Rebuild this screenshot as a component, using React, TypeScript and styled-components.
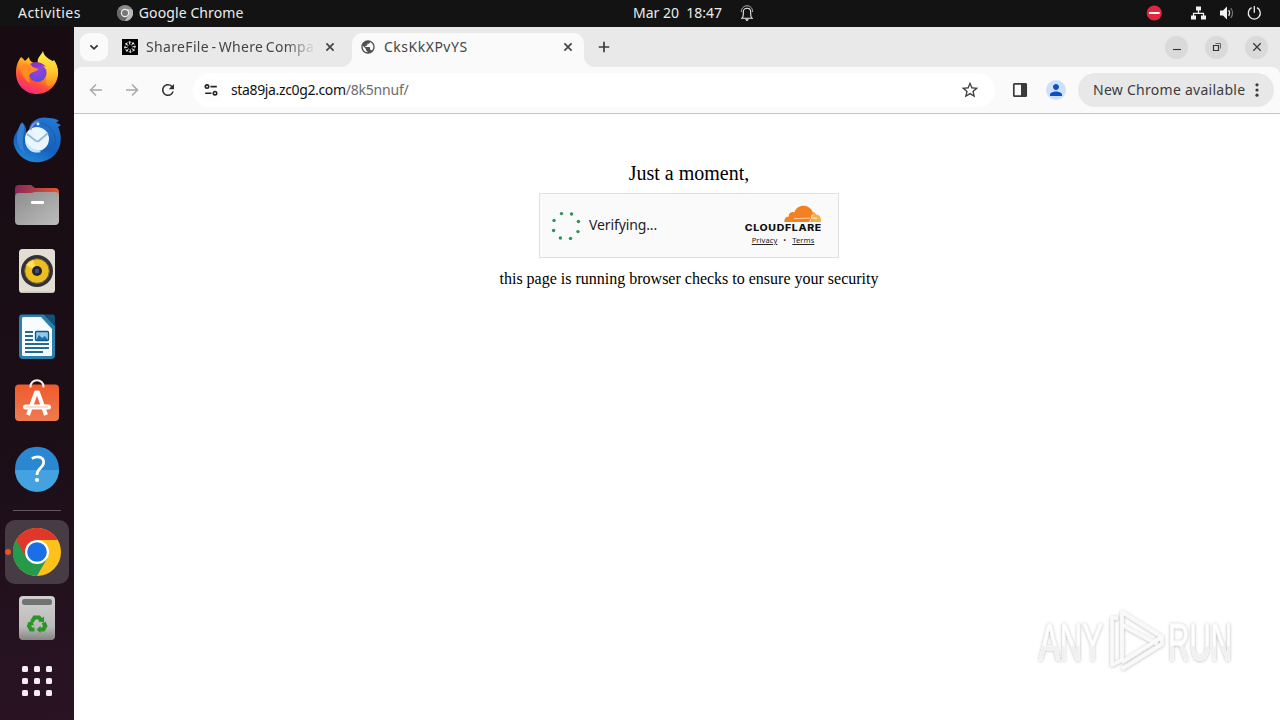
import React from "react";
import styled, { createGlobalStyle } from "styled-components";
import { MdOutlineStarBorder, MdPerson, MdPublic, MdRefresh } from "react-icons/md";

const GlobalStyle = createGlobalStyle`
  * {
    box-sizing: border-box;
  }
  body {
    margin: 0;
    overflow: hidden;
  }
`

const dots = [0, 1, 2, 3, 4, 5, 6, 7].map((i) => {
  const angle = ((i * 45 - 20) * Math.PI) / 180
  return { x: 15 + 13.2 * Math.cos(angle), y: 15 + 13.2 * Math.sin(angle) }
})

const FirefoxIcon = () => (
  <svg width="48" height="48" viewBox="0 0 48 48">
    <defs>
      <linearGradient id="ffBody" x1="0.8" y1="0.1" x2="0.3" y2="1">
        <stop offset="0" stopColor="#ffe141" />
        <stop offset="0.4" stopColor="#ff9a1f" />
        <stop offset="0.7" stopColor="#ff4a3d" />
        <stop offset="1" stopColor="#f5248a" />
      </linearGradient>
      <linearGradient id="ffTail" x1="0" y1="0" x2="0" y2="1">
        <stop offset="0" stopColor="#fff44f" />
        <stop offset="0.6" stopColor="#ffc52b" />
        <stop offset="1" stopColor="#ff8a20" />
      </linearGradient>
      <radialGradient id="ffGlobe" cx="0.5" cy="0.3" r="0.7">
        <stop offset="0" stopColor="#a240e0" />
        <stop offset="1" stopColor="#5a4bd6" />
      </radialGradient>
    </defs>
    <path d="M8 8 C10 9 11 11 12 12 L16 8 C16 11 18 13 21 14 L30 13 C34 8 39 11 42 14 C46 20 46 27 43 33 C39 41 32 45 24 45 C12 45 3 36 3 24 C3 19 4 13 8 8Z" fill="url(#ffBody)" />
    <path d="M30 2 C31 8 36 9 39 13 L41 11 C46 18 46 27 41 34 C37 39 34 38 33 33 L34 20 C29 18 23 15 25 10 C26 7 29 5 30 2Z" fill="url(#ffTail)" />
    <circle cx="24.5" cy="24" r="9" fill="url(#ffGlobe)" />
    <path d="M17 15 C22 12 30 13 33 18 C27 15 24 18 22 20Z" fill="#8c35cb" />
    <path d="M7 17 C12 14 17 15 20 18 L25 20 C24 23 20 22 17 25 C15 28 16 32 18 34 C11 32 8 24 7 17Z" fill="#ff8b21" />
  </svg>
)

const ThunderbirdIcon = () => (
  <svg width="48" height="48" viewBox="0 0 48 48">
    <defs>
      <linearGradient id="tbBody" x1="0.7" y1="0" x2="0.3" y2="1">
        <stop offset="0" stopColor="#2277d0" />
        <stop offset="0.6" stopColor="#1560bd" />
        <stop offset="1" stopColor="#2387d9" />
      </linearGradient>
    </defs>
    <path d="M16 14 C18 5 27 1 36 3 C40 3 44 4 46 6 L43 7.5 L48 10 L45 12 C51 24 47 39 35 44.5 C20 52 5 44 1 30 C-1 21 4 18 9 7 C12 10 14 13 13 20Z" fill="url(#tbBody)" />
    <path d="M8 8 C2 20 2 30 12 39 C7 26 12 18 11 10Z" fill="#347fd0" />
    <circle cx="24" cy="24" r="12" fill="#eaf6ff" />
    <path d="M14 19 L23 26 Q25 27 27 25 L35 18" fill="none" stroke="#91badc" strokeWidth="1.8" />
    <path d="M12 27 C14 36 21 39 28 37 C24 34 22 35 18 32Z" fill="#c6e7fb" />
    <path d="M17 14 C18 9 22 6 27 6 C22 8 20 10 18 16Z" fill="#9d8ae9" />
    <circle cx="25" cy="9" r="1.4" fill="#e0f5ff" />
    <path d="M28 8 C39 11 44 20 42 31" fill="none" stroke="#175fae" />
  </svg>
)

const FilesIcon = () => (
  <svg width="48" height="48" viewBox="0 0 48 48">
    <defs>
      <linearGradient id="filesBack">
        <stop stopColor="#832a5c" />
        <stop offset="1" stopColor="#e9562d" />
      </linearGradient>
      <linearGradient id="filesFront" x2="1" y2="1">
        <stop stopColor="#8d8d8d" />
        <stop offset="1" stopColor="#bdbdbd" />
      </linearGradient>
    </defs>
    <path d="M2 8 Q2 4 6 4 H18 L22 7 H42 Q46 7 46 11 V22 H2Z" fill="url(#filesBack)" />
    <path d="M6 12 H18 L22 11 H42 Q46 11 46 15 V40 Q46 44 42 44 H6 Q2 44 2 40 V16 Q2 12 6 12Z" fill="url(#filesFront)" />
    <rect x="18" y="20" width="13" height="3" rx="1" fill="#fff" />
  </svg>
)

const RhythmboxIcon = () => (
  <svg width="48" height="48" viewBox="0 0 48 48">
    <rect x="6" y="2" width="36" height="44" rx="3.5" fill="#e3ded3" />
    <path d="M9 45.2 H39" stroke="#bdb8ad" />
    <circle cx="24" cy="24" r="16" fill="#303139" />
    <circle cx="24" cy="24" r="12.3" fill="#edbd22" stroke="#786628" />
    <path d="M24 24 L13 18 A12 12 0 0 1 20 13Z" fill="#ffe05b" />
    <circle cx="24" cy="24" r="5" fill="#23252e" />
    <circle cx="24" cy="24" r="2.2" fill="#485164" />
  </svg>
)

const WriterIcon = () => (
  <svg width="48" height="48" viewBox="0 0 48 48">
    <path d="M9 1.5 H31 L42 13 V42 Q42 46 38 46 H10 Q6 46 6 42 V5 Q6 1.5 9 1.5Z" fill="#2b81ab" />
    <path d="M10.5 4 H28 L39 16 V41.5 Q39 43 37.5 43 H10.5 Q9 43 9 41.5 V5.5 Q9 4 10.5 4Z" fill="#f8fcff" />
    <path d="M31 1.5 H40 Q42 1.5 42 4 V13Z" fill="#145174" />
    <path d="M12 19 H20 M12 23 H20 M12 27 H20 M12 31 H36 M12 35 H36 M12 39 H30" stroke="#226b91" strokeWidth="2" />
    <rect x="22.5" y="18.5" width="13" height="9" rx="1" fill="#8fc9eb" stroke="#14557f" strokeWidth="1.3" />
    <path d="M23 27 L26 22 L29 25 L32 23 L35 27Z" fill="#1673ac" />
  </svg>
)

const SoftwareIcon = () => (
  <svg width="48" height="48" viewBox="0 0 48 48">
    <defs>
      <linearGradient id="bag" x2="0" y2="1">
        <stop stopColor="#ef5a2b" />
        <stop offset="1" stopColor="#ee7b50" />
      </linearGradient>
    </defs>
    <rect x="2" y="5.5" width="44" height="36.5" rx="4" fill="url(#bag)" />
    <path d="M17.5 8.5 V7.5 A6.5 6.3 0 0 1 30.5 7.5 V8.5" fill="none" stroke="#f8eee8" strokeWidth="2" />
    <path d="M15 36 L23 13.5 H25 L33 36" fill="none" stroke="#fff" strokeWidth="4" strokeLinejoin="round" />
    <rect x="10" y="25.5" width="28" height="5" rx="2.5" fill="#fff" />
    <path d="M13 28 H35" stroke="#f3c1ac" strokeWidth="1" />
  </svg>
)

const HelpIcon = () => (
  <svg width="48" height="48" viewBox="0 0 48 48">
    <circle cx="24" cy="23.7" r="22" fill="#2b87d1" />
    <path d="M2 25 A22 22 0 0 0 46 25Z" fill="#43a2df" />
    <path d="M18.8 13.5 C26 9.8 31.5 13 30.5 18.5 C29.5 23.5 24 23 24 30" fill="none" stroke="#fff" strokeWidth="2.8" />
    <circle cx="24" cy="35" r="2.1" fill="#fff" />
  </svg>
)

const ChromeIcon = () => (
  <svg width="48" height="48" viewBox="0 0 48 48">
    <circle cx="24" cy="24" r="24" fill="#fcc21b" />
    <path d="M24 24 L3.2 12 A24 24 0 0 0 24 48 L34.4 30Z" fill="#27994b" />
    <path d="M3.2 12 A24 24 0 0 1 44.8 12 H24 L13.6 30Z" fill="#e0372b" />
    <circle cx="24" cy="24" r="12" fill="#fff" />
    <circle cx="24" cy="24" r="9.8" fill="#1a6fe8" />
  </svg>
)

const TrashIcon = () => (
  <svg width="48" height="48" viewBox="0 0 48 48">
    <defs>
      <linearGradient id="bin" x2="0" y2="1">
        <stop stopColor="#d0d0d0" />
        <stop offset="0.7" stopColor="#bbb" />
        <stop offset="1" stopColor="#858585" />
      </linearGradient>
    </defs>
    <rect x="6" y="2" width="36" height="44" rx="4" fill="url(#bin)" />
    <rect x="9" y="5" width="30" height="6" rx="2.5" fill="#727272" />
    <g fill="none" stroke="#2a9426" strokeWidth="4">
      <path d="M19 27.5 L21.5 23.5 H26 L28 26" />
      <path d="M30.5 28.5 L32.3 32 L30.3 35.5 H27" />
      <path d="M21.5 35.5 H18 L16 32 L17.5 29" />
    </g>
    <g fill="#2a9426">
      <path d="M25 27.5 L31 28.3 L31 22.5Z" />
      <path d="M27.5 31.8 V39.2 L23.7 35.5Z" />
      <path d="M14.3 29 L19.6 26.5 L20.8 31.7Z" />
    </g>
  </svg>
)

const launchers = [FirefoxIcon, ThunderbirdIcon, FilesIcon, RhythmboxIcon, WriterIcon, SoftwareIcon, HelpIcon]

const Cross = () => (
  <svg width="16" height="16" viewBox="0 0 16 16">
    <path d="M4.4 4.4 L11.6 11.6 M11.6 4.4 L4.4 11.6" stroke="#454545" strokeWidth="1.7" />
  </svg>
)

const ShareFileLogo = () => (
  <svg width="16" height="16" viewBox="0 0 16 16">
    <rect width="16" height="16" fill="#000" />
    {[0, 45, 90, 135, 180, 225, 270, 315].map((a) => (
      <path key={a} d="M8 5.7 L7 2.6 L9.3 3.4" fill="none" stroke="#fff" strokeWidth="0.9" transform={`rotate(${a} 8 8)`} />
    ))}
  </svg>
)

const TopBar: React.FC = () => (
  <Panel>
    <PanelLeft>
      <PanelText spacing={0.45}>Activities</PanelText>
      <AppMenu>
        <svg width="16" height="16" viewBox="0 0 16 16">
          <circle cx="8" cy="8" r="8" fill="#8b8b8b" />
          <path d="M8 8 L1 4 A8 8 0 0 0 8 16 L12 10Z" fill="#686868" />
          <path d="M8 4 H15 A8 8 0 0 1 8 16 L11.5 10Z" fill="#b8b8b8" />
          <circle cx="8" cy="8" r="3.6" fill="#777" stroke="#eee" strokeWidth="1.2" />
        </svg>
        <PanelText spacing={0.1}>Google Chrome</PanelText>
      </AppMenu>
    </PanelLeft>
    <Clock>
      <PanelText spacing={0}>Mar 20&nbsp; 18:47</PanelText>
      <svg width="16" height="18" viewBox="0 0 16 18">
        <path d="M2 14.3 H14 M3.4 14 C4.6 12.5 4.3 10 4.3 8 C4.3 3 11.7 3 11.7 8 C11.7 10 11.4 12.5 12.6 14" fill="none" stroke="#eee" strokeWidth="1.1" />
        <path d="M2.3 8 C2.3 4.5 4.5 1.8 8 1.8 C11.5 1.8 13.7 4.5 13.7 8" fill="none" stroke="#c8c8c8" strokeWidth="0.9" />
        <path d="M6 15.3 H10 L8 17.3Z" fill="#fff" />
      </svg>
    </Clock>
    <Tray>
      <svg width="16" height="16" viewBox="0 0 16 16">
        <circle cx="8.3" cy="8" r="7.6" fill="#e22640" />
        <rect x="3" y="7" width="10.6" height="2" fill="#fff" />
      </svg>
      <svg width="16" height="16" viewBox="-0.5 0 16 16">
        <path d="M8 4 V8 M3 12 V8.4 H13 V12" fill="none" stroke="#f2f2f2" strokeWidth="1.2" />
        <path d="M5.5 1.5 H10.5 V5.5 H5.5Z M0.5 10.5 H5.5 V14.5 H0.5Z M10.5 10.5 H15.5 V14.5 H10.5Z" fill="#f2f2f2" />
      </svg>
      <svg width="16" height="16" viewBox="-0.5 0 16 16">
        <path d="M1.5 5.5 H4.5 L8.5 1.5 V14.5 L4.5 10.5 H1.5Z" fill="#f2f2f2" />
        <path d="M10.2 5.2 Q12 8 10.2 10.8" fill="none" stroke="#ddd" strokeWidth="1.3" />
        <path d="M12.3 3 Q15.8 8 12.3 13" fill="none" stroke="#777" strokeWidth="1.2" />
      </svg>
      <svg width="16" height="16" viewBox="0 0 16 16">
        <path d="M5.6 2.7 A6 6 0 1 0 11 2.7 M8.3 1 V7.8" fill="none" stroke="#eee" strokeWidth="1.3" />
      </svg>
    </Tray>
  </Panel>
)

const DockBar: React.FC = () => (
  <Dock>
    {launchers.map((Icon, i) => (
      <Launcher key={i}>
        <Icon />
      </Launcher>
    ))}
    <DockLine />
    <Launcher isActive>
      <RunningDot />
      <ChromeIcon />
    </Launcher>
    <Launcher>
      <TrashIcon />
    </Launcher>
    <AppGrid>
      {Array.from({ length: 9 }, (_, i) => (
        <AppDot key={i} />
      ))}
    </AppGrid>
  </Dock>
)

const BrowserTabs: React.FC = () => (
  <TabStrip>
    <TabSearch>
      <svg width="16" height="16" viewBox="0 0 16 16">
        <path d="M4.4 6.3 L8 9.8 L11.6 6.3" fill="none" stroke="#333" strokeWidth="1.8" />
      </svg>
    </TabSearch>
    <Tab>
      <ShareFileLogo />
      <TabTitle spacing={0.34} isFaded>ShareFile - Where Compa</TabTitle>
      <Cross />
    </Tab>
    <Tab isActive>
      <MdPublic size={16} color="#505050" />
      <TabTitle spacing={0.5}>CksKkXPvYS</TabTitle>
      <Cross />
    </Tab>
    <NewTab>
      <svg width="16" height="16" viewBox="0 0 16 16">
        <path d="M8 2.8 V13.2 M2.8 8 H13.2" stroke="#3c3c3c" strokeWidth="1.7" />
      </svg>
    </NewTab>
    <WindowButtons>
      <WindowButton>
        <svg width="16" height="16" viewBox="0 0 16 16">
          <path d="M4 10.5 H12" stroke="#333" strokeWidth="1.1" />
        </svg>
      </WindowButton>
      <WindowButton>
        <svg width="16" height="16" viewBox="0 0 16 16">
          <path d="M4.5 6.5 H9.5 V11.5 H4.5Z" fill="none" stroke="#333" strokeWidth="1.2" />
          <path d="M6.5 4.5 H11.5 V9.5" fill="none" stroke="#666" />
        </svg>
      </WindowButton>
      <WindowButton>
        <svg width="16" height="16" viewBox="0 0 16 16">
          <path d="M4.3 4.3 L11.7 11.7 M11.7 4.3 L4.3 11.7" stroke="#3a3a3a" strokeWidth="1.3" />
        </svg>
      </WindowButton>
    </WindowButtons>
  </TabStrip>
)

const BrowserToolbar: React.FC = () => (
  <Toolbar>
    <ToolButton>
      <svg width="16" height="16" viewBox="0 0 16 16">
        <path d="M14 8 H3 M8 2.5 L2.5 8 L8 13.5" fill="none" stroke="#a8a8a8" strokeWidth="1.5" />
      </svg>
    </ToolButton>
    <ToolButton>
      <svg width="16" height="16" viewBox="0 0 16 16">
        <path d="M2 8 H13 M8 2.5 L13.5 8 L8 13.5" fill="none" stroke="#a8a8a8" strokeWidth="1.5" />
      </svg>
    </ToolButton>
    <ToolButton>
      <MdRefresh size={18} color="#303030" />
    </ToolButton>
    <Omnibox>
      <SiteInfo>
        <svg width="16" height="16" viewBox="0 0 16 16">
          <g fill="none" stroke="#222" strokeWidth="1.6">
            <circle cx="4" cy="4.6" r="1.7" />
            <path d="M7.5 4.6 H13.8 M2.2 11.2 H8.5" />
            <circle cx="12" cy="11.2" r="1.7" />
          </g>
        </svg>
      </SiteInfo>
      <UrlText>
        <Host>sta89ja.zc0g2.com</Host>
        <Path>/8k5nnuf/</Path>
      </UrlText>
      <MdOutlineStarBorder size={20} color="#3f3f3f" />
    </Omnibox>
    <ToolButton>
      <svg width="16" height="16" viewBox="0 0 16 16">
        <rect x="1.8" y="1.8" width="12.4" height="12.4" rx="0.8" fill="none" stroke="#3b3b3b" strokeWidth="1.7" />
        <rect x="9" y="1.5" width="5.5" height="13" fill="#3b3b3b" />
      </svg>
    </ToolButton>
    <ToolButton>
      <Avatar>
        <MdPerson size={18} color="#0b4fcb" />
      </Avatar>
    </ToolButton>
    <UpdateChip>
      <ChipText>New Chrome available</ChipText>
      <svg width="6" height="16" viewBox="0 0 6 16">
        <circle cx="3" cy="2.8" r="1.6" fill="#3c3c3c" />
        <circle cx="3" cy="8" r="1.6" fill="#3c3c3c" />
        <circle cx="3" cy="13.2" r="1.6" fill="#3c3c3c" />
      </svg>
    </UpdateChip>
  </Toolbar>
)

const Challenge: React.FC = () => (
  <Widget>
    <svg width="30" height="30" viewBox="0 0 30 30">
      {dots.map((dot, i) => (
        <circle key={i} cx={dot.x} cy={dot.y} r="1.7" fill="#2b9355" />
      ))}
    </svg>
    <Verifying>Verifying...</Verifying>
    <Brand>
      <svg width="78" height="29" viewBox="0 0 78 29">
        <path d="M60 18 L65 8 C69 7 71.5 8.5 72 10.5 C75.5 10.5 77.5 13.5 77 18Z" fill="#fbad41" />
        <path d="M40.5 18 C39.9 14.5 42 12.5 45 12.5 C44 9 48 7 50.5 8.5 C53 -1 67 0 69 9.5 L67.5 14 H70 L66 18Z" fill="#f48120" />
        <path d="M50 14.7 L66 14.1" stroke="#fff" strokeWidth="0.6" />
        <path d="M68.3 10.5 L67.5 14.2 H73 M65.5 18 L67 15" fill="none" stroke="#fff" strokeWidth="0.9" />
        <text transform="translate(0.7 27.2) scale(1.2 1)" textLength="63.8" lengthAdjust="spacing" fontFamily="Inter, Liberation Sans, sans-serif" fontSize="8.8" fontWeight="800" fill="#111">CLOUDFLARE</text>
      </svg>
      <Links>
        <SmallLink>Privacy</SmallLink>
        <span>•</span>
        <SmallLink>Terms</SmallLink>
      </Links>
    </Brand>
  </Widget>
)

const Watermark: React.FC = () => (
  <WatermarkBox>
    <svg width="214" height="76" viewBox="0 0 214 76">
      <defs>
        <filter id="soft" x="-10%" y="-10%" width="120%" height="130%">
          <feDropShadow dx="0" dy="0.5" stdDeviation="1.6" floodColor="#000" floodOpacity="0.3" />
        </filter>
        <linearGradient id="fade" x1="0" y1="0" x2="0" y2="1">
          <stop offset="0.57" stopColor="#fff" />
          <stop offset="0.58" stopColor="#f0f0f0" />
        </linearGradient>
      </defs>
      <g filter="url(#soft)" fill="url(#fade)" stroke="#f8f8f8" strokeWidth="0.8" fontFamily="Liberation Sans, sans-serif" fontSize="52">
        <text transform="translate(9 55.5) scale(0.6 1)">ANY</text>
        <text transform="translate(138 55.5) scale(0.57 1)">RUN</text>
      </g>
      <g filter="url(#soft)" fill="none" stroke="#f9f9f9" strokeWidth="3.6" strokeLinejoin="round">
        <path d="M92 49 V8 L132 33 L92 58" />
        <path d="M88 14 L82 14 V61 L92 56 V21 L127 40 M92 65 L132 40 V33" />
      </g>
    </svg>
  </WatermarkBox>
)

const App: React.FC = () => {
  return (
    <>
      <GlobalStyle />
      <Desktop>
        <TopBar />
        <Workspace>
          <DockBar />
          <Browser>
            <BrowserTabs />
            <BrowserToolbar />
            <Page>
              <Heading>Just a moment,</Heading>
              <Challenge />
              <Note>this page is running browser checks to ensure your security</Note>
            </Page>
          </Browser>
        </Workspace>
        <Watermark />
      </Desktop>
    </>
  )
}

export default App

const Desktop = styled.div`
  display: flex;
  flex-direction: column;
  position: relative;
  width: 1280px;
  height: 720px;
  overflow: hidden;
  font-family: "Noto Sans", "Open Sans", sans-serif;
  font-size: 14px;

  svg {
    display: block;
    flex-shrink: 0;
  }
`
const Panel = styled.div`
  display: grid;
  grid-template-columns: 633px 1fr auto;
  align-items: center;
  height: 27px;
  padding-bottom: 1px;
  background: #131313;
`
const PanelLeft = styled.div`
  display: flex;
  align-items: center;
  padding-left: 18px;
`
const PanelText = styled.span<{ spacing: number }>`
  font-size: 14px;
  line-height: 26px;
  letter-spacing: ${({ spacing }) => spacing}px;
  white-space: nowrap;
  color: #ececec;
`
const AppMenu = styled.div`
  display: flex;
  align-items: center;
  gap: 6px;
  margin-left: 36px;
`
const Clock = styled.div`
  display: flex;
  align-items: center;
  gap: 17px;
`
const Tray = styled.div`
  display: flex;
  align-items: center;
  gap: 12px;
  padding-right: 18px;

  svg:first-child {
    margin-right: 16px;
  }
`
const Workspace = styled.div`
  display: flex;
  flex: 1;
`
const Dock = styled.div`
  display: flex;
  flex-direction: column;
  align-items: center;
  width: 74px;
  padding-top: 13px;
  background: linear-gradient(170deg, #180c12 0%, #1b0e17 60%, #2a1424 100%);
`
const Launcher = styled.div<{ isActive?: boolean }>`
  display: flex;
  align-items: center;
  justify-content: center;
  position: relative;
  width: 64px;
  height: ${({ isActive }) => (isActive ? 64 : 66)}px;
  margin: ${({ isActive }) => (isActive ? "1px 0" : "0")};
  border-radius: 10px;
  background: ${({ isActive }) => (isActive ? "#473c43" : "transparent")};
`
const RunningDot = styled.div`
  position: absolute;
  left: 0;
  top: 29px;
  width: 6px;
  height: 6px;
  border-radius: 3px;
  background: #e95420;
`
const DockLine = styled.div`
  width: 48px;
  height: 1px;
  margin: 8px 0;
  background: #62565d;
`
const AppGrid = styled.div`
  display: grid;
  grid-template-columns: repeat(3, 6px);
  gap: 6px;
  margin-top: 15px;
`
const AppDot = styled.div`
  width: 6px;
  height: 6px;
  border-radius: 1.5px;
  background: #f6eef3;
`
const Browser = styled.div`
  display: flex;
  flex-direction: column;
  flex: 1;
  background: #e9e9e9;
`
const TabStrip = styled.div`
  display: flex;
  align-items: center;
  height: 40px;
  padding-left: 6px;
`
const TabSearch = styled.div`
  display: flex;
  align-items: center;
  justify-content: center;
  width: 28px;
  height: 28px;
  margin-right: 6px;
  border-radius: 9px;
  background: #fafafa;
`
const Tab = styled.div<{ isActive?: boolean }>`
  display: flex;
  align-items: center;
  gap: 8px;
  position: relative;
  width: 232px;
  height: 34px;
  margin-top: 6px;
  margin-right: 6px;
  padding: 0 8px 6px;
  border-radius: 10px 10px 0 0;
  background: ${({ isActive }) => (isActive ? "#fafafa" : "transparent")};

  &::before,
  &::after {
    content: "";
    display: ${({ isActive }) => (isActive ? "block" : "none")};
    position: absolute;
    bottom: 0;
    width: 10px;
    height: 10px;
  }
  &::before {
    left: -10px;
    background: radial-gradient(circle at 0 0, transparent 9.5px, #fafafa 10px);
  }
  &::after {
    right: -10px;
    background: radial-gradient(circle at 100% 0, transparent 9.5px, #fafafa 10px);
  }
`
const TabTitle = styled.span<{ spacing: number, isFaded?: boolean }>`
  flex: 1;
  overflow: hidden;
  line-height: 20px;
  letter-spacing: ${({ spacing }) => spacing}px;
  word-spacing: -1.6px;
  white-space: nowrap;
  color: #454545;
  mask-image: ${({ isFaded }) => (isFaded ? "linear-gradient(90deg, #000 140px, transparent 170px)" : "none")};
`
const NewTab = styled.div`
  display: flex;
  align-items: center;
  justify-content: center;
  width: 28px;
  height: 28px;
`
const WindowButtons = styled.div`
  display: flex;
  gap: 17px;
  margin-left: auto;
  padding-right: 12px;
`
const WindowButton = styled.div`
  display: flex;
  align-items: center;
  justify-content: center;
  width: 23px;
  height: 23px;
  border-radius: 50%;
  background: #dadada;
`
const Toolbar = styled.div`
  display: flex;
  align-items: center;
  height: 47px;
  padding: 0 6px 0 4px;
  border-bottom: 1px solid #c4c4c4;
  border-radius: 8px 8px 0 0;
  background: #fafafa;
`
const ToolButton = styled.div`
  display: flex;
  align-items: center;
  justify-content: center;
  width: 36px;
  height: 34px;
`
const Omnibox = styled.div`
  display: flex;
  align-items: center;
  flex: 1;
  height: 34px;
  margin: 0 7px;
  padding: 0 15px 0 6px;
  border-radius: 17px;
  background: #fff;
`
const SiteInfo = styled.div`
  display: flex;
  align-items: center;
  justify-content: center;
  width: 24px;
  height: 24px;
  margin-right: 8px;
  border-radius: 12px;
  background: #fcfcfc;
`
const UrlText = styled.div`
  display: flex;
  flex: 1;
  line-height: 20px;
`
const Host = styled.span`
  letter-spacing: -0.36px;
  color: #111;
`
const Path = styled.span`
  letter-spacing: -0.2px;
  color: #6b6b6b;
`
const Avatar = styled.div`
  display: flex;
  align-items: center;
  justify-content: center;
  width: 20px;
  height: 20px;
  border-radius: 50%;
  background: #cfe0fb;
`
const UpdateChip = styled.div`
  display: flex;
  align-items: center;
  justify-content: space-between;
  width: 196px;
  height: 34px;
  margin-left: 4px;
  padding: 0 14px 0 15px;
  border-radius: 17px;
  background: #e8e8e8;
`
const ChipText = styled.span`
  line-height: 20px;
  letter-spacing: 0.27px;
  white-space: nowrap;
  color: #3c3c3c;
`
const Page = styled.div`
  display: flex;
  flex-direction: column;
  align-items: center;
  flex: 1;
  padding: 48px 0 0 24px;
  background: #fff;
  font-family: "Liberation Serif", serif;
  color: #000;
`
const Heading = styled.div`
  font-size: 20px;
  line-height: 23px;
`
const Widget = styled.div`
  display: flex;
  align-items: center;
  width: 300px;
  height: 65px;
  margin: 8px 0 12px;
  padding: 0 16px 0 11px;
  border: 1px solid #e0e0e0;
  background: #fafafa;
  font-family: "Noto Sans", "Open Sans", sans-serif;
`
const Verifying = styled.span`
  margin-left: 8px;
  padding-bottom: 2px;
  font-size: 14px;
  line-height: 20px;
  letter-spacing: -0.12px;
  color: #232323;
`
const Brand = styled.div`
  display: flex;
  flex-direction: column;
  align-items: center;
  margin-left: auto;
  padding-bottom: 2px;
`
const Links = styled.div`
  display: flex;
  gap: 6px;
  margin-top: 2px;
  font-size: 7.5px;
  line-height: 10px;
  letter-spacing: 0.1px;
  color: #232323;
`
const SmallLink = styled.span`
  text-decoration: underline;
  text-underline-offset: 1px;
`
const Note = styled.div`
  font-size: 16px;
  line-height: 18px;
`
const WatermarkBox = styled.div`
  position: absolute;
  left: 1030px;
  top: 604px;
`
